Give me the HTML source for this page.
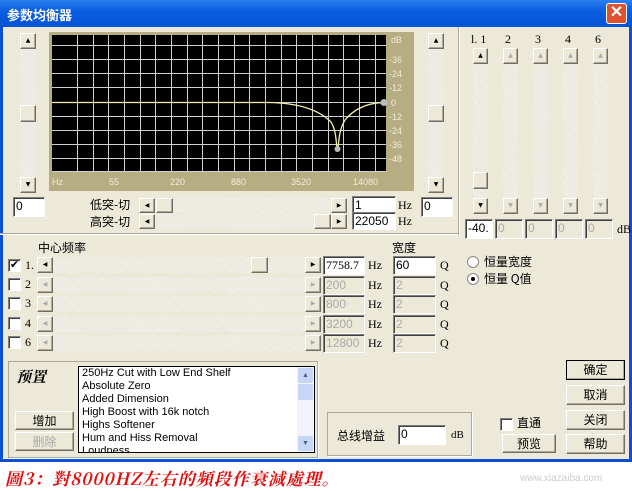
<!DOCTYPE html>
<html><head><meta charset="utf-8"><style>
*{box-sizing:border-box;margin:0;padding:0}
body{width:632px;height:491px;overflow:hidden;background:#fff;font-family:"Liberation Sans","Noto Sans CJK SC",sans-serif;font-size:12px;color:#000;position:relative}
.a{position:absolute}
.win{left:0;top:0;width:632px;height:462px;background:#ece9d8;border-left:3px solid #0a4fd6;border-right:3px solid #0a4fd6;border-bottom:3px solid #0a4fd6}
.title{left:0;top:0;width:632px;height:27px;background:linear-gradient(#2a7ff0,#0a5ee0 40%,#0553d8);color:#fff;font-weight:bold;font-size:13px;padding:5px 0 0 7px;font-family:"Noto Sans CJK SC",sans-serif}
.close{left:606px;top:3px;width:21px;height:21px;background:#e0522e;border:1px solid #fff;border-radius:3px;color:#fff;font-size:16px;text-align:center;line-height:18px;font-weight:bold}
.btn{background:#ece9d8;border:1px solid;border-color:#fff #716f64 #716f64 #fff;box-shadow:inset -1px -1px 0 #aca899}
.track{background:repeating-linear-gradient(45deg,#f4f3ee 0 1px,#e6e3d6 1px 2px)}
.in{background:#fff;border:1px solid;border-color:#7f7f7f #fff #fff #7f7f7f;box-shadow:inset 1px 1px 0 #404040;padding:1px 2px;font-size:12px}
.dis{background:#ece9d8;color:#aaa}
.arr{font-size:6px;text-align:center;line-height:14px;font-family:"DejaVu Sans",sans-serif}
.cb{width:13px;height:13px;background:#fff;border:1px solid;border-color:#808080 #fff #fff #808080;box-shadow:inset 1px 1px 0 #404040}
.ser{font-family:"Liberation Serif","Noto Serif CJK SC",serif}
.cbtn{font-family:"Noto Sans CJK SC",sans-serif;font-size:12px;text-align:center;line-height:18px}
.grp{border:1px solid #aca899;box-shadow:1px 1px 0 #fff}
</style></head><body>
<div class="a win"></div>
<div class="a title">参数均衡器</div>
<div class="a close">✕</div>

<div class="a track" style="left:20px;top:33px;width:16px;height:160px"></div>
<div class="a btn arr" style="left:20px;top:33px;width:16px;height:16px">▲</div>
<div class="a btn" style="left:20px;top:105px;width:16px;height:17px"></div>
<div class="a btn arr" style="left:20px;top:177px;width:16px;height:16px">▼</div>
<div class="a in" style="left:13px;top:197px;width:32px;height:20px">0</div>
<div class="a track" style="left:428px;top:33px;width:16px;height:160px"></div>
<div class="a btn arr" style="left:428px;top:33px;width:16px;height:16px">▲</div>
<div class="a btn" style="left:428px;top:105px;width:16px;height:17px"></div>
<div class="a btn arr" style="left:428px;top:177px;width:16px;height:16px">▼</div>
<div class="a in" style="left:421px;top:197px;width:32px;height:20px">0</div>

<svg class="a" style="left:49px;top:32px" width="365" height="159">
<rect width="365" height="159" fill="#b6ad82"/>
<rect x="3" y="3" width="334" height="137" fill="#000"/>
<g stroke="#cfcfcf" stroke-width="1">
<line x1="3" y1="13.5" x2="337" y2="13.5"/><line x1="3" y1="27.5" x2="337" y2="27.5"/><line x1="3" y1="41.5" x2="337" y2="41.5"/><line x1="3" y1="55.5" x2="337" y2="55.5"/><line x1="3" y1="70.5" x2="337" y2="70.5"/><line x1="3" y1="84.5" x2="337" y2="84.5"/><line x1="3" y1="98.5" x2="337" y2="98.5"/><line x1="3" y1="112.5" x2="337" y2="112.5"/><line x1="3" y1="126.5" x2="337" y2="126.5"/><line x1="3" y1="139.5" x2="337" y2="139.5"/>
<line x1="28.5" y1="3" x2="28.5" y2="140"/><line x1="44.5" y1="3" x2="44.5" y2="140"/><line x1="59.5" y1="3" x2="59.5" y2="140"/><line x1="75.5" y1="3" x2="75.5" y2="140"/><line x1="91.5" y1="3" x2="91.5" y2="140"/><line x1="106.5" y1="3" x2="106.5" y2="140"/><line x1="122.5" y1="3" x2="122.5" y2="140"/><line x1="138.5" y1="3" x2="138.5" y2="140"/><line x1="153.5" y1="3" x2="153.5" y2="140"/><line x1="169.5" y1="3" x2="169.5" y2="140"/><line x1="185.5" y1="3" x2="185.5" y2="140"/><line x1="200.5" y1="3" x2="200.5" y2="140"/><line x1="216.5" y1="3" x2="216.5" y2="140"/><line x1="232.5" y1="3" x2="232.5" y2="140"/><line x1="247.5" y1="3" x2="247.5" y2="140"/><line x1="263.5" y1="3" x2="263.5" y2="140"/><line x1="279.5" y1="3" x2="279.5" y2="140"/><line x1="294.5" y1="3" x2="294.5" y2="140"/><line x1="310.5" y1="3" x2="310.5" y2="140"/><line x1="326.5" y1="3" x2="326.5" y2="140"/>
</g>
<path d="M3 70.5 H220 C250 71 270 78 282 90 C286 96 287 105 288 117 M289 117 C290 105 291 96 296 88 C305 77 318 71 335 70.5" stroke="#f4f0b0" stroke-width="1.3" fill="none"/>
<circle cx="288.5" cy="117" r="3" fill="#bbb"/><circle cx="335" cy="70.5" r="3.5" fill="#bbb"/>
<g fill="#f0eedc" font-size="9" font-family="Liberation Sans,sans-serif">
<text x="342" y="11">dB</text><text x="340" y="31">-36</text><text x="340" y="45">-24</text><text x="340" y="59">-12</text><text x="342" y="74">0</text><text x="340" y="88">-12</text><text x="340" y="102">-24</text><text x="340" y="116">-36</text><text x="340" y="130">-48</text>
<text x="3" y="153">Hz</text><text x="60" y="153">55</text><text x="121" y="153">220</text><text x="182" y="153">880</text><text x="242" y="153">3520</text><text x="304" y="153">14080</text>
</g></svg>

<div class="a" style="left:90px;top:196px;font-family:'Noto Sans CJK SC',sans-serif">低突-切</div>
<div class="a" style="left:90px;top:213px;font-family:'Noto Sans CJK SC',sans-serif">高突-切</div>
<div class="a track" style="left:139px;top:198px;width:207px;height:15px"></div>
<div class="a btn arr" style="left:139px;top:198px;width:16px;height:15px">◀</div>
<div class="a btn" style="left:156px;top:198px;width:17px;height:15px"></div>
<div class="a btn arr" style="left:331px;top:198px;width:16px;height:15px">▶</div>
<div class="a track" style="left:139px;top:214px;width:207px;height:15px"></div>
<div class="a btn arr" style="left:139px;top:214px;width:16px;height:15px">◀</div>
<div class="a btn" style="left:314px;top:214px;width:17px;height:15px"></div>
<div class="a btn arr" style="left:331px;top:214px;width:16px;height:15px">▶</div>
<div class="a in" style="left:352px;top:196px;width:44px;height:18px">1</div>
<div class="a in" style="left:352px;top:212px;width:44px;height:18px">22050</div>
<div class="a ser" style="left:398px;top:198px">Hz</div>
<div class="a ser" style="left:398px;top:214px">Hz</div>
<div class="a" style="left:0;top:233px;width:458px;height:2px;border-top:1px solid #aca899;border-bottom:1px solid #fff"></div>
<div class="a" style="left:458px;top:27px;width:2px;height:208px;border-left:1px solid #aca899;border-right:1px solid #fff"></div>

<div class="a ser" style="left:471px;top:32px;font-size:12px">l. 1</div>
<div class="a ser" style="left:505px;top:32px">2</div>
<div class="a ser" style="left:535px;top:32px">3</div>
<div class="a ser" style="left:565px;top:32px">4</div>
<div class="a ser" style="left:595px;top:32px">6</div>
<div class="a track" style="left:473px;top:48px;width:15px;height:167px"></div>
<div class="a btn arr" style="left:473px;top:48px;width:15px;height:16px">▲</div>
<div class="a btn" style="left:473px;top:172px;width:15px;height:17px"></div>
<div class="a btn arr" style="left:473px;top:198px;width:15px;height:16px">▼</div>
<div class="a track" style="left:503px;top:48px;width:15px;height:167px"></div>
<div class="a btn arr" style="left:503px;top:48px;width:15px;height:16px;color:#aaa">▲</div>
<div class="a btn arr" style="left:503px;top:198px;width:15px;height:16px;color:#aaa">▼</div>
<div class="a track" style="left:533px;top:48px;width:15px;height:167px"></div>
<div class="a btn arr" style="left:533px;top:48px;width:15px;height:16px;color:#aaa">▲</div>
<div class="a btn arr" style="left:533px;top:198px;width:15px;height:16px;color:#aaa">▼</div>
<div class="a track" style="left:563px;top:48px;width:15px;height:167px"></div>
<div class="a btn arr" style="left:563px;top:48px;width:15px;height:16px;color:#aaa">▲</div>
<div class="a btn arr" style="left:563px;top:198px;width:15px;height:16px;color:#aaa">▼</div>
<div class="a track" style="left:593px;top:48px;width:15px;height:167px"></div>
<div class="a btn arr" style="left:593px;top:48px;width:15px;height:16px;color:#aaa">▲</div>
<div class="a btn arr" style="left:593px;top:198px;width:15px;height:16px;color:#aaa">▼</div>
<div class="a in" style="left:465px;top:219px;width:28px;height:20px">-40.</div>
<div class="a in dis" style="left:495px;top:219px;width:28px;height:20px">0</div>
<div class="a in dis" style="left:525px;top:219px;width:28px;height:20px">0</div>
<div class="a in dis" style="left:555px;top:219px;width:28px;height:20px">0</div>
<div class="a in dis" style="left:585px;top:219px;width:28px;height:20px">0</div>
<div class="a ser" style="left:617px;top:222px">dB</div>

<div class="a" style="left:38px;top:239px;font-family:'Noto Sans CJK SC',sans-serif">中心频率</div>
<div class="a" style="left:392px;top:239px;font-family:'Noto Sans CJK SC',sans-serif">宽度</div>

<div class="a cb" style="left:8px;top:259px;font-size:11px;line-height:10px;text-align:center">✔</div>
<div class="a ser" style="left:25px;top:258px">1.</div>
<div class="a track" style="left:37px;top:257px;width:284px;height:16px"></div>
<div class="a btn arr" style="left:37px;top:257px;width:16px;height:16px">◀</div>
<div class="a btn" style="left:251px;top:257px;width:17px;height:16px"></div>
<div class="a btn arr" style="left:305px;top:257px;width:16px;height:16px">▶</div>
<div class="a in ser" style="left:323px;top:256px;width:42px;height:19px">7758.7</div>
<div class="a ser" style="left:368px;top:258px">Hz</div>
<div class="a in" style="left:393px;top:256px;width:43px;height:19px">60</div>
<div class="a ser" style="left:440px;top:258px">Q</div>

<div class="a cb" style="left:8px;top:278px"></div><div class="a ser" style="left:25px;top:277px">2</div>
<div class="a track" style="left:37px;top:277px;width:284px;height:16px"></div>
<div class="a btn arr" style="left:37px;top:277px;width:16px;height:16px;color:#aaa">◀</div>
<div class="a btn arr" style="left:305px;top:277px;width:16px;height:16px;color:#aaa">▶</div>
<div class="a in dis" style="left:323px;top:276px;width:42px;height:19px">200</div>
<div class="a ser" style="left:368px;top:278px">Hz</div>
<div class="a in dis" style="left:393px;top:276px;width:43px;height:19px">2</div>
<div class="a ser" style="left:440px;top:278px">Q</div>

<div class="a cb" style="left:8px;top:297px"></div><div class="a ser" style="left:25px;top:296px">3</div>
<div class="a track" style="left:37px;top:296px;width:284px;height:16px"></div>
<div class="a btn arr" style="left:37px;top:296px;width:16px;height:16px;color:#aaa">◀</div>
<div class="a btn arr" style="left:305px;top:296px;width:16px;height:16px;color:#aaa">▶</div>
<div class="a in dis" style="left:323px;top:295px;width:42px;height:19px">800</div>
<div class="a ser" style="left:368px;top:297px">Hz</div>
<div class="a in dis" style="left:393px;top:295px;width:43px;height:19px">2</div>
<div class="a ser" style="left:440px;top:297px">Q</div>

<div class="a cb" style="left:8px;top:317px"></div><div class="a ser" style="left:25px;top:316px">4</div>
<div class="a track" style="left:37px;top:316px;width:284px;height:16px"></div>
<div class="a btn arr" style="left:37px;top:316px;width:16px;height:16px;color:#aaa">◀</div>
<div class="a btn arr" style="left:305px;top:316px;width:16px;height:16px;color:#aaa">▶</div>
<div class="a in dis" style="left:323px;top:315px;width:42px;height:19px">3200</div>
<div class="a ser" style="left:368px;top:317px">Hz</div>
<div class="a in dis" style="left:393px;top:315px;width:43px;height:19px">2</div>
<div class="a ser" style="left:440px;top:317px">Q</div>

<div class="a cb" style="left:8px;top:336px"></div><div class="a ser" style="left:25px;top:335px">6</div>
<div class="a track" style="left:37px;top:335px;width:284px;height:16px"></div>
<div class="a btn arr" style="left:37px;top:335px;width:16px;height:16px;color:#aaa">◀</div>
<div class="a btn arr" style="left:305px;top:335px;width:16px;height:16px;color:#aaa">▶</div>
<div class="a in dis" style="left:323px;top:334px;width:42px;height:19px">12800</div>
<div class="a ser" style="left:368px;top:336px">Hz</div>
<div class="a in dis" style="left:393px;top:334px;width:43px;height:19px">2</div>
<div class="a ser" style="left:440px;top:336px">Q</div>

<div class="a" style="left:467px;top:256px;width:12px;height:12px;border-radius:50%;background:#fff;border:1px solid #888"></div>
<div class="a" style="left:484px;top:253px;font-family:'Noto Sans CJK SC',sans-serif">恒量宽度</div>
<div class="a" style="left:467px;top:273px;width:12px;height:12px;border-radius:50%;background:#fff;border:1px solid #888"></div>
<div class="a" style="left:471px;top:277px;width:4px;height:4px;border-radius:50%;background:#000"></div>
<div class="a" style="left:484px;top:270px;font-family:'Noto Sans CJK SC',sans-serif">恒量 Q值</div>

<div class="a grp" style="left:8px;top:361px;width:310px;height:97px"></div>
<div class="a" style="left:16px;top:366px;font-size:15px;font-weight:bold;font-style:italic;font-family:'Noto Serif CJK SC',serif">预置</div>
<div class="a" style="left:78px;top:366px;width:237px;height:87px;background:#fff;border:1px solid #000;overflow:hidden;font-size:11px;line-height:13px;padding:0 0 0 3px">250Hz Cut with Low End Shelf<br>Absolute Zero<br>Added Dimension<br>High Boost with 16k notch<br>Highs Softener<br>Hum and Hiss Removal<br>Loudness</div>
<div class="a" style="left:297px;top:367px;width:17px;height:85px;background:#f0f3fa"></div>
<div class="a" style="left:298px;top:368px;width:15px;height:15px;background:#c6d6f7;border-radius:2px;font-size:7px;text-align:center;color:#4d6185;line-height:15px">▲</div>
<div class="a" style="left:298px;top:384px;width:15px;height:16px;background:#c6d6f7;border-radius:2px"></div>
<div class="a" style="left:298px;top:436px;width:15px;height:15px;background:#c6d6f7;border-radius:2px;font-size:7px;text-align:center;color:#4d6185;line-height:15px">▼</div>
<div class="a btn cbtn" style="left:15px;top:411px;width:59px;height:19px">增加</div>
<div class="a btn cbtn" style="left:15px;top:432px;width:59px;height:19px;color:#aaa">删除</div>

<div class="a grp" style="left:327px;top:412px;width:145px;height:44px"></div>
<div class="a" style="left:337px;top:427px;font-family:'Noto Sans CJK SC',sans-serif">总线增益</div>
<div class="a in" style="left:398px;top:425px;width:48px;height:20px">0</div>
<div class="a ser" style="left:451px;top:429px;font-size:11px">dB</div>

<div class="a cb" style="left:500px;top:418px"></div>
<div class="a" style="left:517px;top:414px;font-family:'Noto Sans CJK SC',sans-serif">直通</div>
<div class="a btn cbtn" style="left:502px;top:434px;width:54px;height:19px">预览</div>

<div class="a btn cbtn" style="left:566px;top:360px;width:59px;height:20px;border:1px solid #000">确定</div>
<div class="a btn cbtn" style="left:566px;top:385px;width:59px;height:20px">取消</div>
<div class="a btn cbtn" style="left:566px;top:410px;width:59px;height:20px">关闭</div>
<div class="a btn cbtn" style="left:566px;top:434px;width:59px;height:20px">帮助</div>

<div class="a" style="left:5px;top:465px;color:#e01010;font-size:17px;font-weight:bold;font-style:italic;font-family:'Noto Serif CJK SC',serif;letter-spacing:1px">圖3：對8000HZ左右的頻段作衰減處理。</div>
<div class="a" style="left:520px;top:473px;color:#ccc;font-size:10px">www.xiazaiba.com</div>
</body></html>
